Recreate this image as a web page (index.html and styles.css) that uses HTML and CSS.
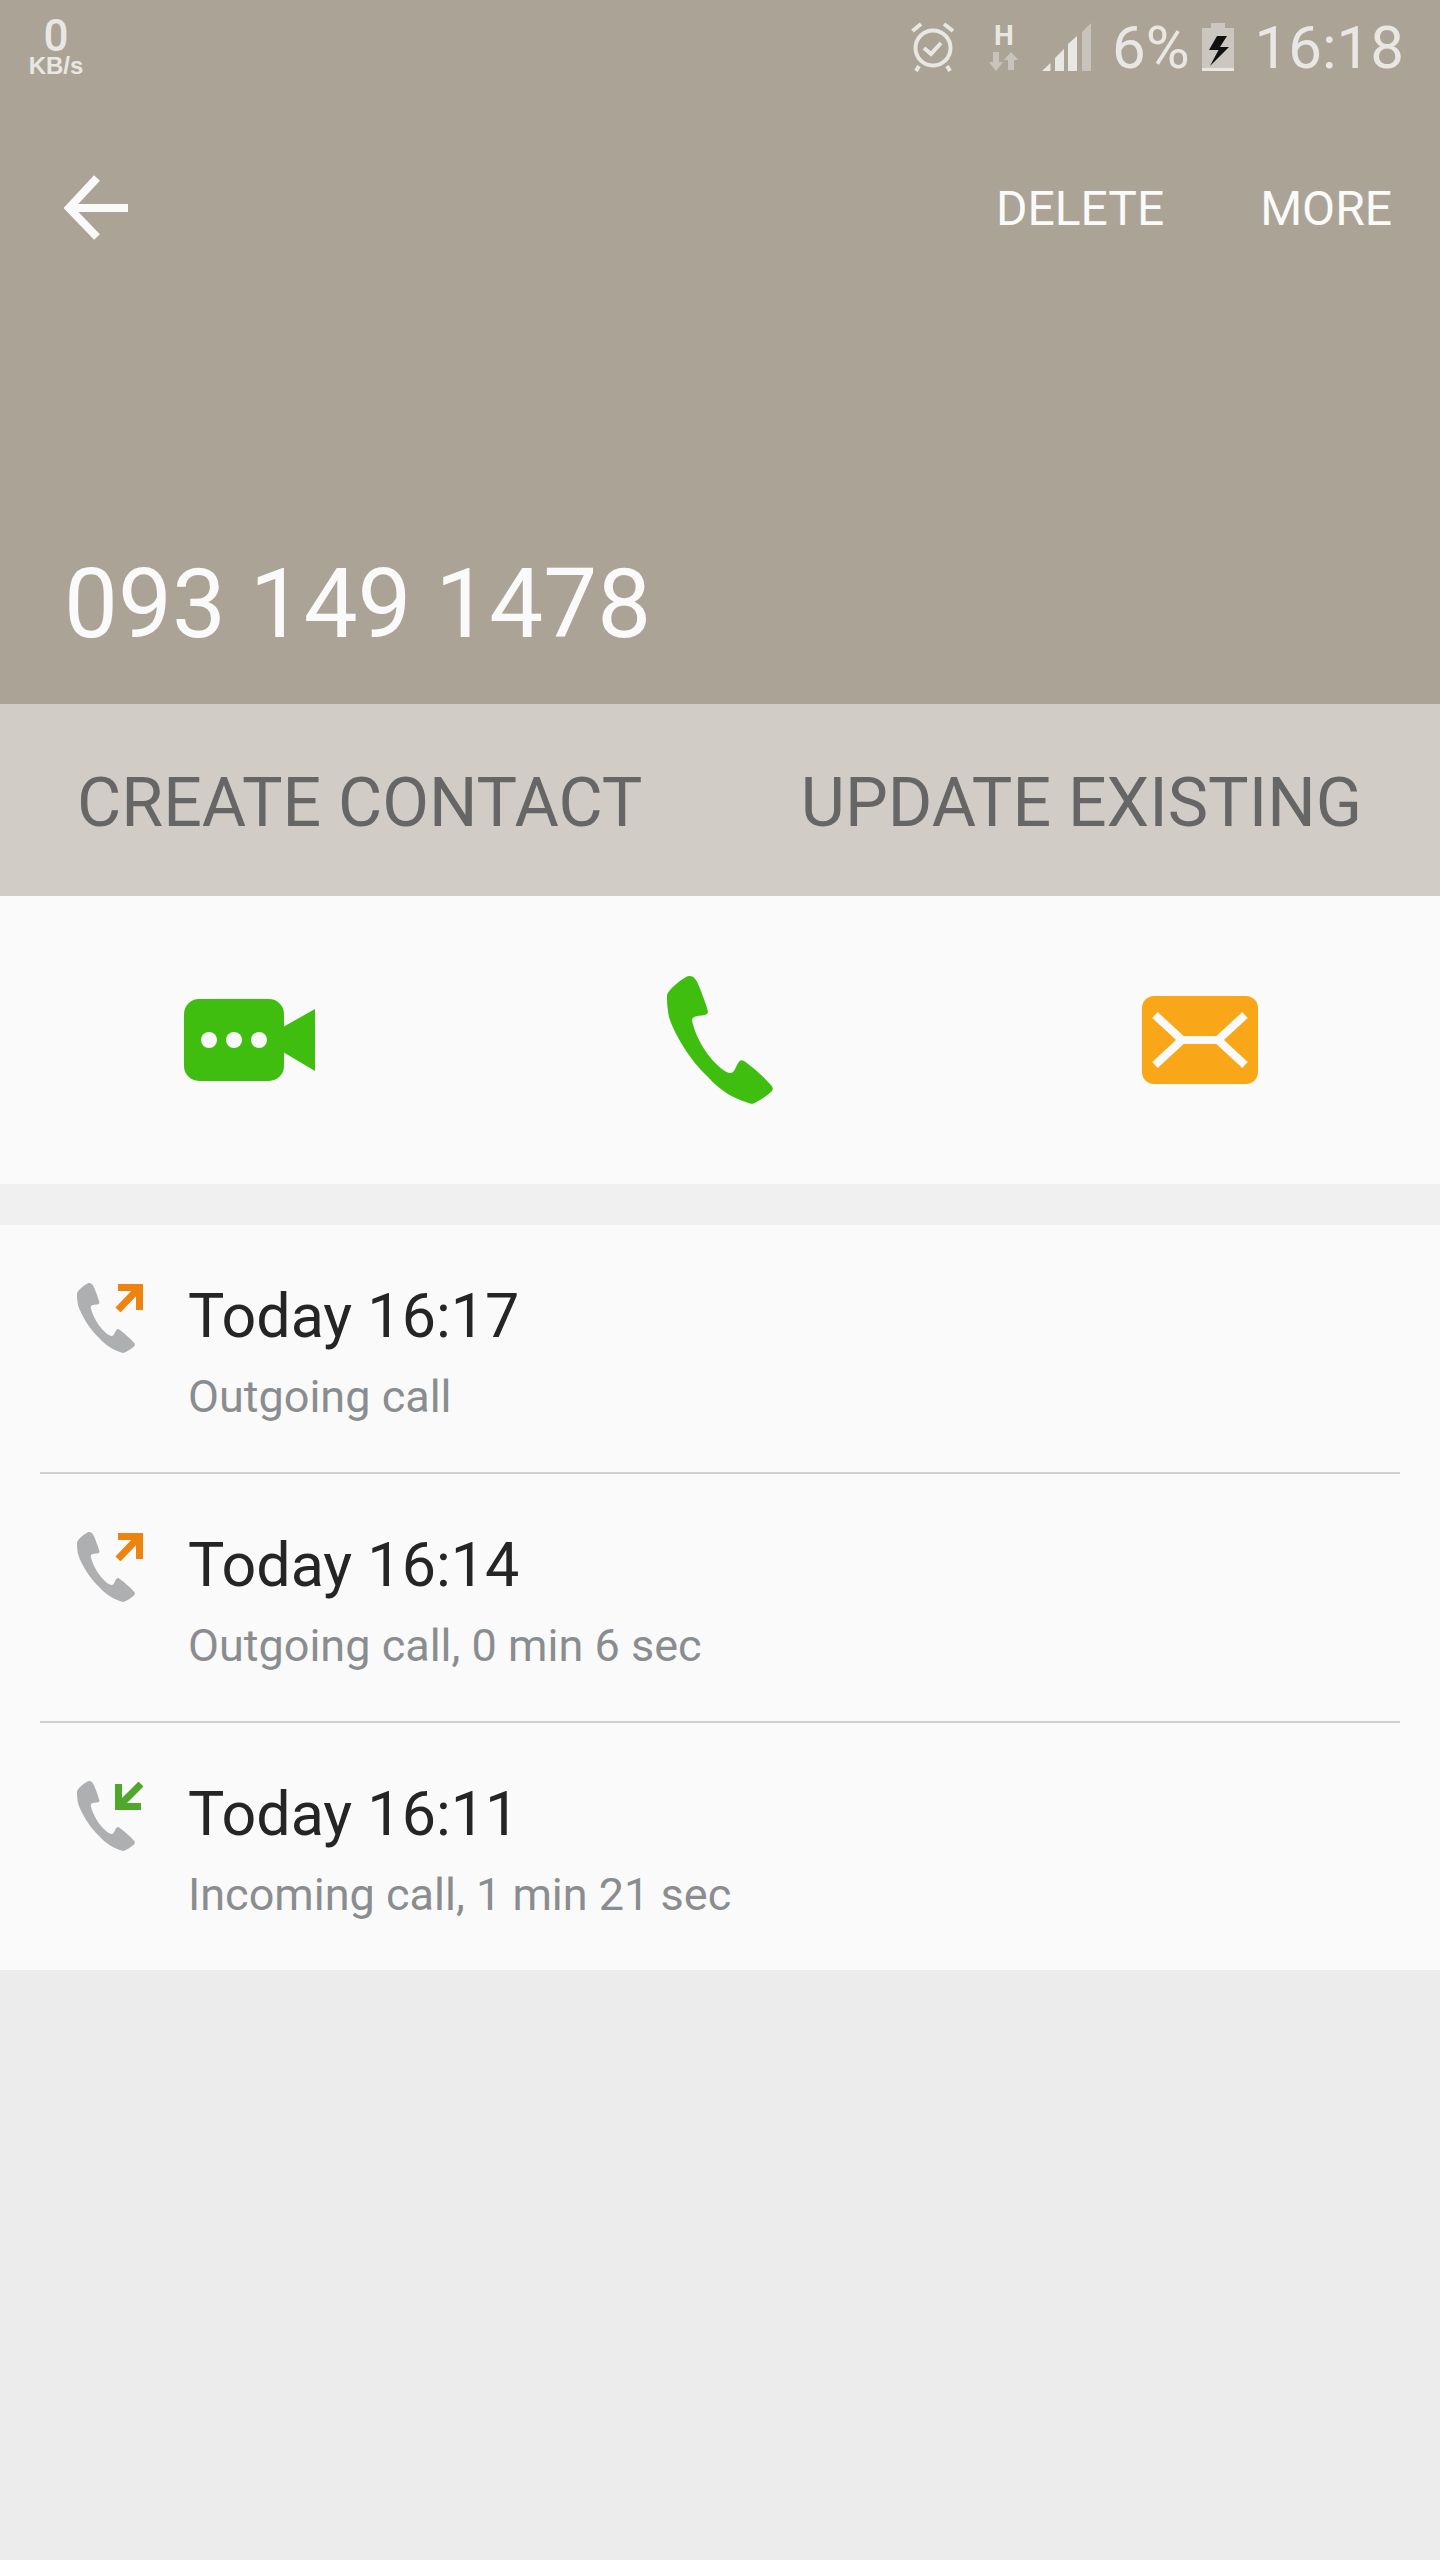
FILE: index.html
```html
<!DOCTYPE html>
<html lang="en">
<head>
    <meta charset="UTF-8">
    <meta name="viewport" content="width=device-width, initial-scale=1.0">
    <title>Call log</title>
    <link rel="stylesheet" href="styles.css">
</head>
<body>
    <svg class="defs" width="0" height="0">
        <symbol id="handset" viewBox="0 0 106 128">
            <path d="M23 0C27 0 30 5 32 10C35 18 40 30 41 36C41 38 39 39 35 39.500C29 40 25 41 25 44C26 50 31 66 43 81C50 90 60 98 64 97C67 96 68 93 70 89C72 85 74 83 77 85C83 89 95 99 102 107C105 110 107 112 105 115C101 119 93 125 85 128C70 124 55 117 40 100C24 85 8 60 2 41C0 30 0 25 0 19C1 14 12 5 19 1C20 0 22 0 23 0Z"/>
        </symbol>
    </svg>

    <header class="header">
        <div class="status-bar">
            <div class="net-speed">
                <span class="net-value">0</span>
                <span class="net-unit">KB/s</span>
            </div>
            <div class="status-right">
                <svg class="alarm" width="44" height="50" viewBox="0 0 44 50" fill="none" stroke="#e9e7e3">
                    <circle cx="22" cy="26" r="17.500" stroke-width="4"/>
                    <path d="M1.500 9L10 2M33 2L42 9" stroke-width="4"/>
                    <path d="M8 44L5 49M36 44L39 49" stroke-width="4"/>
                    <path d="M13 26L20 32L30 21" stroke-width="4"/>
                </svg>
                <div class="network">
                    <span class="network-type">H</span>
                    <svg width="30" height="19" viewBox="0 0 30 19" fill="#c8c4bc">
                        <path d="M4 0H10V10H14L7 19L0 10H4Z"/>
                        <path d="M19 18H25V8H29.500L22 0L15 8H19Z"/>
                    </svg>
                </div>
                <svg class="signal" width="50" height="48" viewBox="0 0 50 48" fill="#e9e7e3">
                    <path d="M0 48L8.500 40V48Z"/>
                    <path d="M13 48V35L22 26V48Z"/>
                    <path d="M26 48V21L35 13V48Z"/>
                    <path d="M40 48V9L49 0V48Z" fill="#c8c4bc"/>
                </svg>
                <span class="battery-level">6%</span>
                <svg class="battery" width="32" height="48" viewBox="0 0 32 48">
                    <path d="M9 0H23V5H32V45H0V5H9Z" fill="#cbc7c0"/>
                    <rect y="45" width="32" height="3" fill="#e9e7e3"/>
                    <path d="M15 13L7 27H16.500L8 43L27 24H18L25 13Z" fill="#111"/>
                </svg>
                <span class="clock">16:18</span>
            </div>
        </div>

        <div class="toolbar">
            <svg class="back" width="64" height="66" viewBox="0 0 64 66" fill="none" stroke="#fafafa" stroke-width="8">
                <path d="M33 3L5 33L33 62"/>
                <path d="M6 33H64"/>
            </svg>
            <div class="toolbar-actions">
                <span>DELETE</span>
                <span>MORE</span>
            </div>
        </div>

        <div class="number">093 149 1478</div>
    </header>

    <div class="contact-bar">
        <span>CREATE CONTACT</span>
        <span>UPDATE EXISTING</span>
    </div>

    <div class="quick-actions">
        <svg class="video" width="131" height="82" viewBox="0 0 131 82">
            <rect width="100" height="82" rx="15" fill="#3fbe0f"/>
            <path d="M99 28L131 10V72L99 53Z" fill="#3fbe0f"/>
            <ellipse cx="25" cy="41" rx="8" ry="8" fill="#fafafa"/>
            <ellipse cx="50" cy="41" rx="8" ry="8" fill="#fafafa"/>
            <ellipse cx="75" cy="41" rx="8" ry="8" fill="#fafafa"/>
        </svg>
        <svg class="call" width="106" height="128" fill="#3fbe0f"><use href="#handset"/></svg>
        <svg class="mail" width="116" height="88" viewBox="0 0 116 88">
            <rect width="116" height="88" rx="12" fill="#f9a719"/>
            <path d="M13 19L40 44H76L103 19M13 69L40 44M76 44L103 69" fill="none" stroke="#fafafa" stroke-width="8"/>
        </svg>
    </div>

    <div class="spacer"></div>

    <div class="log">
        <div class="log-row">
            <div class="log-icon">
                <svg width="58" height="70" fill="#aeafb1"><use href="#handset"/></svg>
                <svg class="dir" width="28" height="28" viewBox="0 0 28 28" fill="none" stroke="#ee8410" stroke-width="7">
                    <path d="M3 3.500H24.500V26"/>
                    <path d="M24 4L3 26"/>
                </svg>
            </div>
            <div>
                <div class="log-time">Today 16:17</div>
                <div class="log-detail">Outgoing call</div>
            </div>
        </div>
        <div class="divider"></div>
        <div class="log-row">
            <div class="log-icon">
                <svg width="58" height="70" fill="#aeafb1"><use href="#handset"/></svg>
                <svg class="dir" width="28" height="28" viewBox="0 0 28 28" fill="none" stroke="#ee8410" stroke-width="7">
                    <path d="M3 3.500H24.500V26"/>
                    <path d="M24 4L3 26"/>
                </svg>
            </div>
            <div>
                <div class="log-time">Today 16:14</div>
                <div class="log-detail">Outgoing call, 0 min 6 sec</div>
            </div>
        </div>
        <div class="divider"></div>
        <div class="log-row">
            <div class="log-icon">
                <svg width="58" height="70" fill="#aeafb1"><use href="#handset"/></svg>
                <svg class="dir" width="28" height="28" viewBox="0 0 28 28" fill="none" stroke="#4fa82c" stroke-width="7">
                    <path d="M3.500 2V24.500H26"/>
                    <path d="M4 24L26 2"/>
                </svg>
            </div>
            <div>
                <div class="log-time">Today 16:11</div>
                <div class="log-detail">Incoming call, 1 min 21 sec</div>
            </div>
        </div>
    </div>
</body>
</html>
```

FILE: styles.css
```css
body {
    margin: 0;
    width: 1440px;
    height: 2560px;
    overflow: hidden;
    background-color: #ececec;
    font-family: Roboto, sans-serif;
}
.defs {
    display: block;
}
.header {
    height: 704px;
    background-color: #aba496;
    color: #fafafa;
    display: flex;
    flex-direction: column;
}
.status-bar {
    height: 94px;
    display: flex;
    justify-content: space-between;
    color: #e9e7e3;
}
.net-speed {
    display: flex;
    flex-direction: column;
    align-items: center;
    margin: 18px 0 0 27px;
    width: 58px;
    font-weight: 500;
}
.net-value {
    font-size: 44px;
    line-height: 36px;
}
.net-unit {
    font-family: "Liberation Sans", sans-serif;
    font-weight: bold;
    font-size: 24px;
    line-height: 24px;
}
.status-right {
    display: flex;
    align-items: center;
    margin-right: 36px;
    height: 94px;
}
.network {
    display: flex;
    flex-direction: column;
    align-items: center;
    margin-left: 34px;
    width: 30px;
}
.network-type {
    font-size: 28px;
    font-weight: bold;
    line-height: 26px;
    margin-bottom: 3px;
}
.signal {
    margin-left: 23px;
}
.battery-level,
.clock {
    font-size: 60px;
    line-height: 60px;
    padding-top: 2px;
}
.battery-level {
    margin-left: 20px;
}
.battery {
    margin-left: 12px;
}
.clock {
    margin-left: 21px;
}
.toolbar {
    margin-top: 58px;
    height: 112px;
    padding: 0 48px 0 64px;
    display: flex;
    justify-content: space-between;
    align-items: center;
}
.toolbar-actions {
    display: flex;
    gap: 96px;
    font-size: 48px;
}
.number {
    margin-top: auto;
    margin-bottom: 44px;
    padding-left: 64px;
    font-size: 96px;
    line-height: 112px;
}
.contact-bar {
    height: 186px;
    padding: 6px 78px 0 77px;
    background-color: #d1cdc6;
    color: #666;
    display: flex;
    align-items: center;
    justify-content: space-between;
    font-size: 68px;
}
.quick-actions {
    height: 288px;
    background-color: #fafafa;
    display: grid;
    grid-template-columns: repeat(3, 1fr);
    align-items: center;
    justify-items: center;
}
.video {
    margin-left: 18px;
}
.spacer {
    height: 41px;
    background-color: #f0f0f0;
}
.log {
    background-color: #fafafa;
}
.log-row {
    height: 247px;
    display: flex;
    padding-left: 77px;
}
.divider {
    height: 2px;
    margin: 0 40px;
    background-color: #cfcfcf;
}
.log-icon {
    position: relative;
    width: 111px;
    padding-top: 58px;
}
.dir {
    position: absolute;
    left: 38px;
    top: 59px;
}
.log-time {
    margin-top: 56px;
    font-size: 61px;
    line-height: 70px;
    color: #252525;
}
.log-detail {
    margin-top: 19px;
    font-size: 45px;
    line-height: 54px;
    color: #8a8d90;
}
```
